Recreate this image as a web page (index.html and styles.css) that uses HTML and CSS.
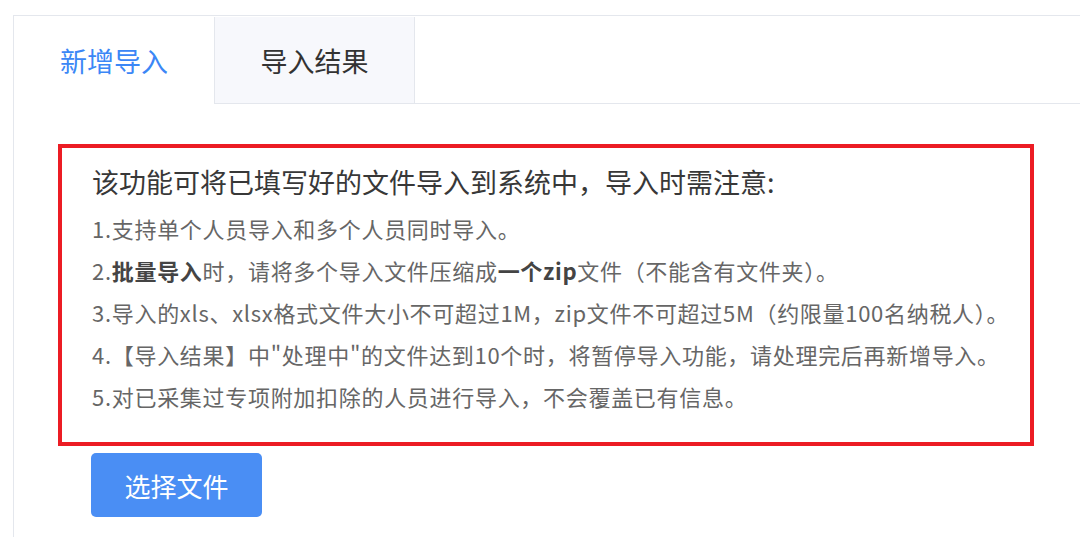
FILE: index.html
```html
<!DOCTYPE html>
<html lang="zh-CN">
<head>
    <meta charset="UTF-8">
    <meta name="viewport" content="width=device-width, initial-scale=1.0">
    <title>新增导入</title>
    <link rel="stylesheet" href="styles.css">
</head>
<body>
    <div class="card">
        <div class="tabs">
            <div class="tab active">新增导入</div>
            <div class="tab">导入结果</div>
            <div class="tab-rest"></div>
        </div>
        <div class="content">
            <div class="notice">
                <div class="notice-title">该功能可将已填写好的文件导入到系统中，导入时需注意:</div>
                <p>1.支持单个人员导入和多个人员同时导入。</p>
                <p>2.<b>批量导入</b>时，请将多个导入文件压缩成<b>一个zip</b>文件（不能含有文件夹）。</p>
                <p>3.导入的xls、xlsx格式文件大小不可超过1M，zip文件不可超过5M（约限量100名纳税人）。</p>
                <p>4.【导入结果】中"处理中"的文件达到10个时，将暂停导入功能，请处理完后再新增导入。</p>
                <p>5.对已采集过专项附加扣除的人员进行导入，不会覆盖已有信息。</p>
            </div>
            <button class="btn-primary">选择文件</button>
        </div>
    </div>
</body>
</html>
```

FILE: styles.css
```css
body {
    margin: 0;
    background-color: #fff;
    font-family: "Noto Sans CJK SC", "Noto Sans", sans-serif;
    overflow: hidden;
}
.card {
    margin: 15px 0 0 13px;
    border-top: 1px solid #e4e7ed;
    border-left: 1px solid #e4e7ed;
    height: 540px;
}
.tabs {
    display: flex;
    height: 88px;
}
.tab {
    width: 200px;
    display: flex;
    align-items: center;
    justify-content: center;
    font-size: 27px;
    color: #333;
    box-sizing: border-box;
}
.tab.active {
    color: #3b87f6;
}
.tab:not(.active) {
    width: 201px;
    margin-top: 1px;
    background-color: #f7f8fc;
    border-left: 1px solid #e4e7ed;
    border-right: 1px solid #e4e7ed;
    border-bottom: 1px solid #e4e7ed;
}
.tab-rest {
    flex: 1;
    border-bottom: 1px solid #e4e7ed;
}
.content {
    padding: 40px 0 0 44px;
}
.notice {
    width: 976px;
    box-sizing: border-box;
    border: 4px solid #ec1c24;
    padding: 13px 10px 25px 30px;
}
.notice-title {
    font-size: 27px;
    line-height: 42px;
    color: #383838;
    margin-bottom: 4px;
}
.notice p {
    margin: 0;
    font-size: 22px;
    line-height: 42px;
    letter-spacing: 0.7px;
    color: #666;
    white-space: nowrap;
}
.notice b {
    color: #444;
}
.btn-primary {
    margin: 7px 0 0 33px;
    width: 171px;
    height: 64px;
    border: none;
    border-radius: 5px;
    background-color: #4a8ef4;
    color: #fff;
    font-family: inherit;
    font-size: 26px;
}
```
